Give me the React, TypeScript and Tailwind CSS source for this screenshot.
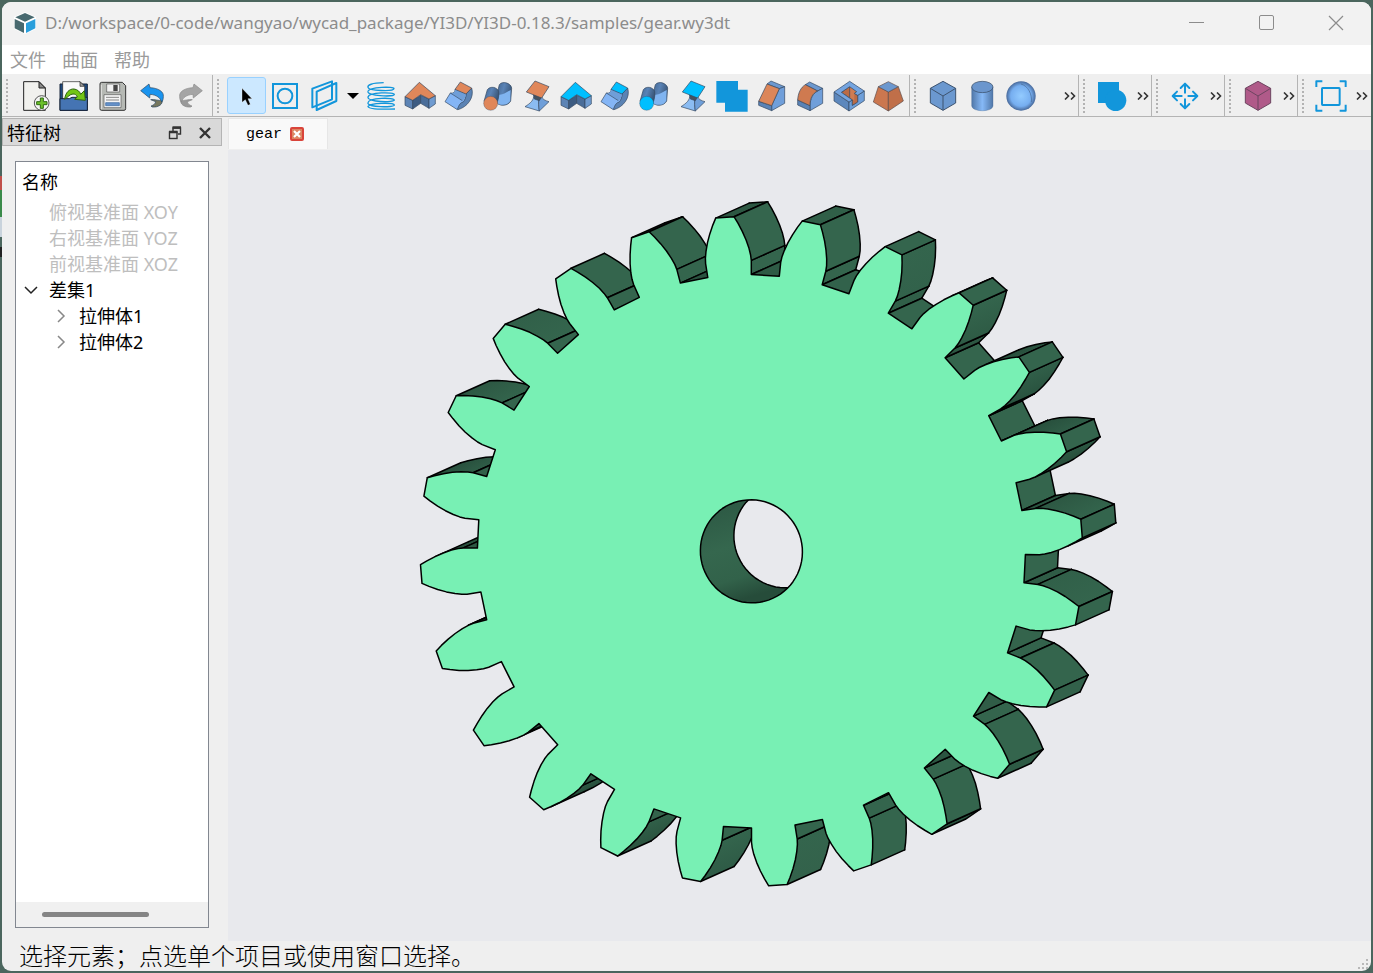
import type { ReactNode } from 'react';
import { useId, useState } from 'react';

const UI_FONT = "font-['Noto_Sans','Noto_Sans_CJK_SC',sans-serif]";

const BLUE = '#1296db';
const EDGE = '#33475f';

/* ---------- toolbar icons, drawn on a 96 x 96 grid ---------- */

function Icon({ children }: { children: ReactNode }) {
  return (
    <svg viewBox="0 0 96 96" className="size-8 shrink-0" fill="none" strokeLinejoin="round" aria-hidden="true">
      {children}
    </svg>
  );
}

function NewIcon() {
  return (
    <Icon>
      <path d="M14 5H60L79 24V91H14Z" fill="#f1f1ee" stroke="#222" strokeWidth="3" />
      <path d="M60 5V24H79Z" fill="#8b8b8b" stroke="#222" strokeWidth="3" />
      <circle cx="68" cy="69" r="22" fill="#f4f4f4" stroke="#555" strokeWidth="3" />
      <path d="M64 54h9v11h11v9H73v11h-9V74H53v-9h11Z" fill="#6cc12a" stroke="#2e6a12" strokeWidth="3" />
    </Icon>
  );
}

function OpenIcon() {
  return (
    <Icon>
      <path d="M6 12H88V91H6Z" fill="#1f4a80" stroke="#16243a" strokeWidth="3" />
      <path d="M14 5H66L80 19V60H14Z" fill="#fafafa" stroke="#222" strokeWidth="2" />
      <path d="M66 5V19H80Z" fill="#999" stroke="#222" strokeWidth="2" />
      <path d="M6 56H34L42 52H88V91H6Z" fill="#4574b3" stroke="#16243a" strokeWidth="3" />
      <path
        d="M20 58C22 38 34 26 48 27C59 28 66 36 68 43L79 32L82 61L50 58L58 51C55 44 51 42 45 42C36 42 30 51 20 58Z"
        fill="#72c516"
        stroke="#2e6410"
        strokeWidth="3"
      />
    </Icon>
  );
}

function SaveIcon() {
  return (
    <Icon>
      <path d="M14 7H76L86 17V86Q86 91 81 91H13Q9 91 9 86V12Q9 7 14 7Z" fill="#b6b9b4" stroke="#333" strokeWidth="3" />
      <path d="M13 14V87" stroke="#e4e4e2" strokeWidth="3" />
      <rect x="29" y="12" width="39" height="24" fill="#f2f2f2" stroke="#555" strokeWidth="2" />
      <rect x="49" y="15" width="13" height="18" fill="#444" />
      <rect x="21" y="44" width="51" height="39" fill="#f5f5f5" stroke="#555" strokeWidth="2" />
      <path d="M27 52H66M27 60H66" stroke="#888" strokeWidth="3" />
      <rect x="26" y="68" width="41" height="9" fill="#6591c9" stroke="#36679f" strokeWidth="2" />
    </Icon>
  );
}

function UndoIcon({ disabled = false }: { disabled?: boolean }) {
  return (
    <Icon>
      <g transform={disabled ? 'matrix(-1 0 0 1 96 0)' : undefined} stroke={disabled ? '#888' : '#27445f'} strokeWidth="2">
        <path d="M78 60C82 72 68 83 48 81L45 78C54 75 58 71 59 65L44 59C56 56 66 64 78 60Z" fill={disabled ? '#999' : '#77785f'} />
        <path d="M14 32L39 12L42 23C68 24 84 36 82 49C82 58 80 63 77 66C74 54 61 44 42 43L41 54Z" fill={disabled ? '#a5a5a5' : '#1a94ef'} />
      </g>
    </Icon>
  );
}

function PointerIcon() {
  return (
    <Icon>
      <path d="M36 25V67L46 59L54 76L61 73L54 56H66Z" fill="#000" stroke="#fff" strokeWidth="1" />
    </Icon>
  );
}

function SketchIcon() {
  return (
    <Icon>
      <rect x="12" y="12" width="72" height="72" stroke={BLUE} strokeWidth="6" strokeLinejoin="miter" />
      <circle cx="48" cy="48" r="22" stroke={BLUE} strokeWidth="6" />
    </Icon>
  );
}

function PlaneIcon() {
  return (
    <Icon>
      <path d="M13 26L72 4V58L13 82Z" stroke={BLUE} strokeWidth="6" />
      <path d="M26 35L85 9V63L26 90Z" stroke={BLUE} strokeWidth="6" />
    </Icon>
  );
}

function CoilIcon() {
  return (
    <Icon>
      <g stroke={BLUE} strokeWidth="4">
        <path d="M56 8C20 8 7 16 9 22C11 33 86 35 87 26C88 19 14 20 9 34" />
        <path d="M9 34C4 48 86 52 88 43C88 36 12 36 9 51C6 67 88 68 88 60C88 52 12 52 9 68C4 83 88 83 88 75C86 67 16 68 9 79C10 89 62 88 90 87" />
      </g>
    </Icon>
  );
}

type TintProps = { top: string };

function ExtrudeIcon({ top }: TintProps) {
  return (
    <Icon>
      <g stroke={EDGE} strokeWidth="2">
        <path d="M3 50L26 61V87L3 76Z" fill="#5d84b5" />
        <path d="M26 61L50 46V70L26 87Z" fill="#3d5c82" />
        <path d="M50 46L75 57V85L50 70Z" fill="#4a6d99" />
        <path d="M75 57L94 47V72L75 85Z" fill="#6f9bd0" />
        <path d="M3 50L46 7L94 47L75 57L50 44L26 61Z" fill={top} />
      </g>
    </Icon>
  );
}

function RevolveIcon({ top }: TintProps) {
  return (
    <Icon>
      <g stroke={EDGE} strokeWidth="2">
        <path d="M86 24C95 53 73 81 45 89L39 84C47 70 67 66 69 42Z" fill="#5b83b4" />
        <path d="M36 28C37 36 32 41 22 39L6 65L43 89C47 75 54 66 60 67C67 59 69 51 69 42Z" fill="#84b5f5" />
        <path d="M36 28C37 36 32 41 25 40L59 62C66 55 69 49 69 42Z" fill="#6f9ed8" stroke="none" />
        <path d="M22 39L58 62" />
        <path d="M52 6L86 24L69 42L36 28Z" fill={top} />
      </g>
    </Icon>
  );
}

function PipeIcon({ top }: TintProps) {
  const id = useId();
  return (
    <Icon>
      <defs>
        <linearGradient id={id} x1="0" y1="0" x2="1" y2="0.4">
          <stop offset="0" stopColor="#42648e" />
          <stop offset="0.5" stopColor="#5a83b6" />
          <stop offset="1" stopColor="#3a5678" />
        </linearGradient>
      </defs>
      <path d="M47 34L52 14C60 2 86 8 89 24L86 63C78 78 56 80 43 68Z" fill={`url(#${id})`} stroke={EDGE} strokeWidth="2" />
      <path d="M50 44C62 46 74 36 86 30L85 62C78 77 56 78 44 68Z" fill="#80b4f0" />
      <path d="M6 64L16 29C25 17 46 21 50 35C52 49 48 61 44 72Z" fill={`url(#${id})`} stroke={EDGE} strokeWidth="2" />
      <circle cx="26" cy="70" r="21" fill={top} stroke={EDGE} strokeWidth="1" />
    </Icon>
  );
}

function LoftIcon({ top }: TintProps) {
  return (
    <Icon>
      <g stroke={EDGE} strokeWidth="2">
        <path d="M38 44C40 60 28 70 12 80L55 93C53 80 52 69 54 50Z" fill="#8bbcf2" />
        <path d="M54 50C52 69 53 80 55 93L84 65C72 62 64 57 62 50Z" fill="#6f9fd9" />
        <path d="M38 42L62 50L55 62L40 57Z" fill="#45525f" />
        <path d="M42 3L84 20L62 54L16 36Z" fill={top} />
      </g>
    </Icon>
  );
}

function UnionIcon() {
  return (
    <Icon>
      <path d="M1 3H66V29H95V95H27V68H1Z" fill={BLUE} />
    </Icon>
  );
}

function ChamferIcon() {
  return (
    <Icon>
      <g stroke={EDGE} strokeWidth="2">
        <path d="M48 3L89 20L73 26L36 12Z" fill="#6c98cf" />
        <path d="M73 26L89 20V70L50 92V77Z" fill="#709fda" />
        <path d="M11 64L50 77V92L11 76Z" fill="#5a83b6" />
        <path d="M36 12L73 26L50 77L11 64Z" fill="#dc8659" />
      </g>
    </Icon>
  );
}

function FilletIcon() {
  return (
    <Icon>
      <g stroke={EDGE} strokeWidth="2">
        <path d="M47 6L86 25L71 33L34 14Z" fill="#6c98cf" />
        <path d="M71 33L86 25V70L48 92V77C49 55 57 40 71 33Z" fill="#709fda" />
        <path d="M11 60L48 77V92L11 75Z" fill="#5a83b6" />
        <path d="M34 14L71 33C55 40 48 55 48 77L11 60C12 40 20 22 34 14Z" fill="#cf7a50" />
      </g>
    </Icon>
  );
}

function ShellIcon() {
  return (
    <Icon>
      <g stroke={EDGE} strokeWidth="2">
        <path d="M3 36L48 66V93L3 63Z" fill="#5d88bd" />
        <path d="M48 66L58 60V76L74 66V46L94 33V62L48 93Z" fill="#6f9fd9" />
        <path d="M25 37L50 20L71 35L64 40L74 46V66L58 76V60Z" fill="#bb6b45" />
        <path d="M50 20L71 35L64 40V62L50 52Z" fill="#cf7c53" stroke="none" />
        <path d="M50 20V53" />
        <path d="M3 36L50 4L94 33L74 46L64 40L71 35L50 20L25 37L58 60L48 66Z" fill="#74a4e0" />
      </g>
    </Icon>
  );
}

function DraftIcon() {
  return (
    <Icon>
      <g stroke="#5a4a48" strokeWidth="2">
        <path d="M19 20L49 36V93L4 66Z" fill="#cb774f" />
        <path d="M79 20L49 36V93L94 63Z" fill="#c06f49" />
        <path d="M49 5L79 20L49 36L19 20Z" fill="#6c98cf" />
      </g>
    </Icon>
  );
}

function CubeIcon({ fill, edge }: { fill: string; edge: string }) {
  return (
    <Icon>
      <path d="M48 4L86 25V69L48 91L10 69V25Z" fill={fill} stroke={edge} strokeWidth="3" />
      <path d="M10 25L48 48L86 25M48 48V91" stroke={edge} strokeWidth="3" />
    </Icon>
  );
}

function CylinderIcon() {
  const id = useId();
  return (
    <Icon>
      <defs>
        <linearGradient id={id}>
          <stop offset="0" stopColor="#5077a8" />
          <stop offset="0.5" stopColor="#86b9f7" />
          <stop offset="1" stopColor="#5077a8" />
        </linearGradient>
      </defs>
      <path d="M17 21V78C19 97 79 97 81 78V21Z" fill={`url(#${id})`} stroke="#4a6a92" strokeWidth="1" />
      <ellipse cx="49" cy="21" rx="32" ry="17" fill="#6b96cd" stroke={EDGE} strokeWidth="2" />
    </Icon>
  );
}

function SphereIcon() {
  const id = useId();
  return (
    <Icon>
      <defs>
        <radialGradient id={id}>
          <stop offset="0" stopColor="#93cbff" />
          <stop offset="0.7" stopColor="#76aef0" />
          <stop offset="1" stopColor="#48699a" />
        </radialGradient>
      </defs>
      <circle cx="48" cy="48" r="44" fill={`url(#${id})`} />
      <path d="M48 12C69 18 82 42 79 66" stroke="#47688f" strokeWidth="2" />
    </Icon>
  );
}

function BooleanIcon() {
  return (
    <Icon>
      <path d="M6 6H69V69H6Z" fill={BLUE} />
      <circle cx="59" cy="61" r="32" fill={BLUE} />
    </Icon>
  );
}

function MoveIcon() {
  return (
    <Icon>
      <g stroke={BLUE} strokeWidth="6" strokeLinecap="round">
        <path d="M48 13V38M48 58V83M13 48H38M58 48H83" />
        <path d="M35 24L48 11L61 24M35 72L48 85L61 72M24 35L11 48L24 61M72 35L85 48L72 61" />
      </g>
    </Icon>
  );
}

function FitIcon() {
  return (
    <Icon>
      <g stroke={BLUE} strokeWidth="6">
        <rect x="21" y="24" width="53" height="51" rx="2" />
        <path d="M4 21V4H22M74 4H92V21M92 74V92H74M22 92H4V74" />
      </g>
    </Icon>
  );
}

/* ---------- toolbars ---------- */

type Tool = { label: string; icon: ReactNode };

const ORANGE = '#e0875a';
const CYAN = '#00bfff';

const fileTools: Tool[] = [
  { label: '新建', icon: <NewIcon /> },
  { label: '打开', icon: <OpenIcon /> },
  { label: '保存', icon: <SaveIcon /> },
  { label: '撤销', icon: <UndoIcon /> },
  { label: '重做', icon: <UndoIcon disabled /> },
];

const pickTools: Tool[] = [
  { label: '选择', icon: <PointerIcon /> },
  { label: '草图', icon: <SketchIcon /> },
  { label: '基准面', icon: <PlaneIcon /> },
];

const featureTools: Tool[] = [
  { label: '螺旋线', icon: <CoilIcon /> },
  { label: '拉伸', icon: <ExtrudeIcon top={ORANGE} /> },
  { label: '旋转', icon: <RevolveIcon top={ORANGE} /> },
  { label: '扫描', icon: <PipeIcon top={ORANGE} /> },
  { label: '放样', icon: <LoftIcon top={ORANGE} /> },
  { label: '拉伸切除', icon: <ExtrudeIcon top={CYAN} /> },
  { label: '旋转切除', icon: <RevolveIcon top={CYAN} /> },
  { label: '扫描切除', icon: <PipeIcon top={CYAN} /> },
  { label: '放样切除', icon: <LoftIcon top={CYAN} /> },
  { label: '合并', icon: <UnionIcon /> },
  { label: '倒角', icon: <ChamferIcon /> },
  { label: '圆角', icon: <FilletIcon /> },
  { label: '抽壳', icon: <ShellIcon /> },
  { label: '拔模', icon: <DraftIcon /> },
];

const solidTools: Tool[] = [
  { label: '长方体', icon: <CubeIcon fill="#6b98cf" edge="#3d536f" /> },
  { label: '圆柱体', icon: <CylinderIcon /> },
  { label: '球体', icon: <SphereIcon /> },
];

function ToolButton({ tool, active = false, onClick }: { tool: Tool; active?: boolean; onClick?: () => void }) {
  return (
    <button
      type="button"
      aria-label={tool.label}
      onClick={onClick}
      className={`flex h-[37px] w-[39px] shrink-0 items-center justify-center rounded-[3px] border pr-px ${
        active ? 'border-[#99d1ff] bg-[#cce8ff]' : 'border-transparent'
      }`}
    >
      {tool.icon}
    </button>
  );
}

function Toolbar({ children, overflow = false, grow = false, last = false }: { children: ReactNode; overflow?: boolean; grow?: boolean; last?: boolean }) {
  return (
    <div
      role="toolbar"
      className={`flex h-[41px] shrink-0 items-center ${grow ? 'grow' : overflow ? 'w-[73px]' : ''} ${
        last ? 'pr-[2px]' : 'border-r border-[#b4b4b4] pr-px'
      }`}
    >
      <span className="flex w-[14px] shrink-0 pl-1">
        <span className="h-[34px] border-l-2 border-dotted border-[#b3b3b3]" />
      </span>
      {children}
      {overflow && (
        <button type="button" aria-label="更多" className="ml-auto flex h-[37px] w-[14px] items-center justify-center">
          <svg viewBox="0 0 12 8" className="h-2 w-3" fill="none" stroke="#333" strokeWidth="1.6" aria-hidden="true">
            <path d="M1 0.5L4.5 4L1 7.5M7 0.5L10.5 4L7 7.5" />
          </svg>
        </button>
      )}
    </div>
  );
}

/* ---------- gear model ---------- */

type Point = [number, number];

const TEETH = 24;
const CENTER: Point = [523.4, 400.8];
// screen images of the model's unit axes and of its thickness
const AXIS_U: Point = [-26.5, -334];
const AXIS_V: Point = [330.3, -22.8];
const DEPTH: Point = [33.5, -15];
const ROOT = 0.827;
const BASE = 0.869;
const BORE = 0.154;
const HALF_TOOTH = (4.57 * Math.PI) / 180;
const FLANK_RADII = [0.869, 0.885, 0.905, 0.93, 0.955, 0.98, 1];

function project(r: number, angle: number): Point {
  const a = r * Math.cos(angle);
  const b = r * Math.sin(angle);
  return [CENTER[0] + a * AXIS_U[0] + b * AXIS_V[0], CENTER[1] + a * AXIS_U[1] + b * AXIS_V[1]];
}

function flankAngle(r: number) {
  const pressure = Math.acos(BASE / r);
  return HALF_TOOTH - (Math.tan(pressure) - pressure);
}

// one polyline per smooth face of the rim, clockwise
function buildFaces() {
  const faces: Point[][] = [];
  for (let i = 0; i < TEETH; i++) {
    const mid = (i * 2 * Math.PI) / TEETH;
    const next = ((i + 1) * 2 * Math.PI) / TEETH;
    const rise = FLANK_RADII.map((r) => project(r, mid - flankAngle(r)));
    const fall = [...FLANK_RADII].reverse().map((r) => project(r, mid + flankAngle(r)));
    const rootStart = project(ROOT, mid - HALF_TOOTH);
    const rootEnd = project(ROOT, mid + HALF_TOOTH);
    faces.push([rootStart, rise[0]]);
    faces.push(rise);
    faces.push([rise[rise.length - 1], fall[0]]);
    faces.push(fall);
    faces.push([fall[fall.length - 1], rootEnd]);
    faces.push([rootEnd, project(ROOT, next - HALF_TOOTH)]);
  }
  return faces;
}

const depthLength = Math.hypot(DEPTH[0], DEPTH[1]);
const shift = ([x, y]: Point): Point => [x + DEPTH[0], y + DEPTH[1]];
const toPath = (points: Point[]) => `M${points.map(([x, y]) => `${x.toFixed(1)} ${y.toFixed(1)}`).join('L')}`;

// above zero when the wall standing on this edge turns to the viewer
function facing(a: Point, b: Point) {
  const dx = b[0] - a[0];
  const dy = b[1] - a[1];
  return (dy * DEPTH[0] - dx * DEPTH[1]) / (Math.hypot(dx, dy) * depthLength);
}

function wallColor(value: number) {
  const t = Math.min(1, Math.max(0, value) * 1.3);
  const mix = (a: number, b: number) => Math.round(a + (b - a) * t);
  return `rgb(${mix(37, 52)}, ${mix(75, 101)}, ${mix(57, 77)})`;
}

function buildWalls(faces: Point[][]) {
  return faces
    .map((face) =>
      face.filter((p, k) => (k > 0 && facing(face[k - 1], p) > 0) || (k < face.length - 1 && facing(p, face[k + 1]) > 0)),
    )
    .filter((visible) => visible.length > 1)
    .map((visible) => {
      const first = visible[0];
      const last = visible[visible.length - 1];
      // shading changes only across the depth direction
      const across = ((last[1] - first[1]) * DEPTH[0] - (last[0] - first[0]) * DEPTH[1]) / depthLength ** 2;
      return {
        visible,
        from: wallColor(facing(first, visible[1])),
        to: wallColor(facing(visible[visible.length - 2], last)),
        gradientEnd: [first[0] - DEPTH[1] * across, first[1] + DEPTH[0] * across] as Point,
        ends: [first, last],
        order: (first[0] + last[0]) * DEPTH[0] + (first[1] + last[1]) * DEPTH[1],
      };
    })
    .sort((a, b) => a.order - b.order);
}

const faces = buildFaces();
const walls = buildWalls(faces);
const outline = `${toPath(faces.flat())}Z`;
const bore = `${toPath(Array.from({ length: 72 }, (_, i) => project(BORE, (i * Math.PI) / 36)))}Z`;

function GearView() {
  return (
    <svg viewBox="0 0 1143 790" className="h-full w-full" fill="none" strokeLinejoin="round" strokeLinecap="round" role="img" aria-label="gear">
      <defs>
        <clipPath id="bore-clip">
          <path d={bore} />
        </clipPath>
        <linearGradient id="bore-wall" x1="0" y1="0" x2="0.3" y2="1">
          <stop offset="0" stopColor="#2b5642" />
          <stop offset="0.5" stopColor="#35674e" />
          <stop offset="0.8" stopColor="#32624a" />
          <stop offset="1" stopColor="#264c3a" />
        </linearGradient>
        {walls.map(({ visible, from, to, gradientEnd }, i) => (
          <linearGradient
            key={i}
            id={`wall-${i}`}
            gradientUnits="userSpaceOnUse"
            x1={visible[0][0]}
            y1={visible[0][1]}
            x2={gradientEnd[0]}
            y2={gradientEnd[1]}
          >
            <stop offset="0" stopColor={from} />
            <stop offset="1" stopColor={to} />
          </linearGradient>
        ))}
      </defs>
      {walls.map(({ visible, ends }, i) => (
        <g key={i} stroke="#000" strokeWidth="1.5">
          <path d={`${toPath([...visible, ...[...visible].reverse().map(shift)])}Z`} fill={`url(#wall-${i})`} stroke="none" />
          <path d={toPath(visible.map(shift))} />
          {ends.map((p, k) => (
            <path key={k} d={toPath([p, shift(p)])} />
          ))}
        </g>
      ))}
      <path d={outline} fill="#78f0b4" stroke="#000" strokeWidth="1.5" />
      <g clipPath="url(#bore-clip)">
        <path d={bore} fill="url(#bore-wall)" />
        <path d={bore} fill="#e8e9ed" stroke="#000" strokeWidth="1.5" transform={`translate(${DEPTH[0]} ${DEPTH[1]})`} />
      </g>
      <path d={bore} stroke="#000" strokeWidth="1.5" />
    </svg>
  );
}

/* ---------- feature tree ---------- */

const planes = ['俯视基准面 XOY', '右视基准面 YOZ', '前视基准面 XOZ'];
const bodies = ['拉伸体1', '拉伸体2'];

function FeatureTree() {
  const [open, setOpen] = useState(true);

  return (
    <div className="mx-[13px] mt-[15px] mb-[13px] flex min-h-0 flex-1 flex-col border border-[#828790] bg-white">
      <div className="flex h-[37px] shrink-0 items-center pt-1 pl-[6px]">名称</div>
      <ul role="tree" className="min-h-0 flex-1 overflow-hidden leading-[26px] whitespace-nowrap">
        {planes.map((name) => (
          <li key={name} role="treeitem" className="h-[26px] pl-[33px] text-[#bebebe]">
            {name}
          </li>
        ))}
        <li role="treeitem" aria-expanded={open}>
          <button type="button" onClick={() => setOpen(!open)} className="flex h-[26px] items-center pl-2">
            <svg viewBox="0 0 14 14" className="mr-[11px] size-[14px]" fill="none" stroke="#222" strokeWidth="1.5" aria-hidden="true">
              <path d="M1 4L7 10L13 4" />
            </svg>
            差集1
          </button>
          {open && (
            <ul role="group">
              {bodies.map((name) => (
                <li key={name} role="treeitem">
                  <button type="button" className="flex h-[26px] items-center pl-[38px]">
                    <svg viewBox="0 0 14 14" className="mr-[11px] size-[14px]" fill="none" stroke="#888" strokeWidth="1.5" aria-hidden="true">
                      <path d="M4 1L10 7L4 13" />
                    </svg>
                    {name}
                  </button>
                </li>
              ))}
            </ul>
          )}
        </li>
      </ul>
      <div className="flex h-[25px] shrink-0 items-center bg-[#f0f0f0] pl-[26px]">
        <div className="h-[5px] w-[107px] rounded-full bg-[#858585]" />
      </div>
    </div>
  );
}

export default function App() {
  const [active, setActive] = useState('选择');

  return (
    <div className={`flex h-screen overflow-hidden bg-[#4b665e] pt-[2px] pr-[2px] pb-[2px] text-[18px] text-black ${UI_FONT}`}>
      <div className="flex w-[2px] shrink-0 flex-col pt-[174px]">
        <div className="h-[14px] bg-[#c0504a]" />
        <div className="h-[27px] bg-[#3a8a4a]" />
        <div className="h-[20px] bg-[#c9d3dc]" />
        <div className="mt-[10px] h-[10px] bg-[#222]" />
      </div>
      <div className="flex min-w-0 flex-1 flex-col overflow-hidden rounded-[9px] bg-[#efefef]">
        <header className="flex h-[43px] shrink-0 items-center bg-[#f2f2f2] pb-[2px] pl-3 text-[#8c8c8c]">
          <svg viewBox="0 0 66 66" className="size-[22px] shrink-0" aria-hidden="true">
            <path d="M33 0L66 15V51L33 66L0 51V15Z" fill="#fff" />
            <path d="M33 3L62 16L33 29L4 16Z" fill="#48696f" />
            <path d="M2 21L30 34V63L2 49Z" fill="#48696f" />
            <path d="M36 34L64 21V49L36 63Z" fill="#2a9fdc" />
          </svg>
          <h1 className="ml-[9px] min-w-0 flex-1 truncate text-[17px]">
            D:/workspace/0-code/wangyao/wycad_package/YI3D/YI3D-0.18.3/samples/gear.wy3dt
          </h1>
          <button type="button" aria-label="最小化" className="flex h-full w-[70px] items-center justify-center">
            <span className="h-px w-[15px] bg-[#8c8c8c]" />
          </button>
          <button type="button" aria-label="最大化" className="flex h-full w-[70px] items-center justify-center">
            <span className="size-[15px] rounded-[2px] border border-[#8c8c8c]" />
          </button>
          <button type="button" aria-label="关闭" className="flex h-full w-[70px] items-center justify-center">
            <svg viewBox="0 0 16 16" className="size-4" stroke="#8c8c8c" strokeWidth="1.2" aria-hidden="true">
              <path d="M1 1L15 15M15 1L1 15" />
            </svg>
          </button>
        </header>

        <nav className="flex h-[30px] shrink-0 items-center gap-4 border-b border-[#efefef] bg-white pt-[2px] pl-2 text-[#9a9a9a]">
          <button type="button">文件</button>
          <button type="button">曲面</button>
          <button type="button">帮助</button>
        </nav>

        <div className="flex h-[42px] shrink-0 border-b border-[#b4b4b4]">
          <Toolbar>
            {fileTools.map((tool) => (
              <ToolButton key={tool.label} tool={tool} />
            ))}
          </Toolbar>
          <Toolbar>
            {pickTools.map((tool) => (
              <ToolButton key={tool.label} tool={tool} active={tool.label === active} onClick={() => setActive(tool.label)} />
            ))}
            <button type="button" aria-label="基准面选项" className="flex h-[37px] w-[18px] items-center justify-center">
              <span className="border-x-[6px] border-t-[6px] border-x-transparent border-t-black" />
            </button>
            {featureTools.map((tool) => (
              <ToolButton key={tool.label} tool={tool} active={tool.label === active} onClick={() => setActive(tool.label)} />
            ))}
          </Toolbar>
          <Toolbar grow overflow>
            {solidTools.map((tool) => (
              <ToolButton key={tool.label} tool={tool} />
            ))}
          </Toolbar>
          <Toolbar overflow>
            <ToolButton tool={{ label: '布尔运算', icon: <BooleanIcon /> }} />
          </Toolbar>
          <Toolbar overflow>
            <ToolButton tool={{ label: '平移', icon: <MoveIcon /> }} />
          </Toolbar>
          <Toolbar overflow>
            <ToolButton tool={{ label: '显示模式', icon: <CubeIcon fill="#b05a89" edge="#6d4560" /> }} />
          </Toolbar>
          <Toolbar overflow last>
            <ToolButton tool={{ label: '适应窗口', icon: <FitIcon /> }} />
          </Toolbar>
        </div>

        <div className="flex min-h-0 flex-1">
          <aside className="mt-px mr-[6px] flex w-[220px] shrink-0 flex-col">
            <div className="flex h-[28px] shrink-0 items-center border border-[#b4b4b4] bg-[#d9d9d9] pt-[2px] pr-px pl-1">
              <h2 className="flex-1">特征树</h2>
              <button type="button" aria-label="浮动" className="flex w-[30px] justify-center">
                <svg viewBox="0 0 14 14" className="size-[14px]" fill="none" stroke="#333" aria-hidden="true">
                  <path d="M5 5V2H12.5V8H10" strokeWidth="1.4" />
                  <path d="M4.5 1.5H13" strokeWidth="2.4" />
                  <rect x="1.5" y="6" width="7.5" height="6.5" strokeWidth="1.4" />
                  <path d="M1 6H9.5" strokeWidth="2.4" />
                </svg>
              </button>
              <button type="button" aria-label="关闭特征树" className="flex w-[30px] justify-center">
                <svg viewBox="0 0 12 12" className="size-3" stroke="#333" strokeWidth="2.4" aria-hidden="true">
                  <path d="M1 1L11 11M11 1L1 11" />
                </svg>
              </button>
            </div>
            <FeatureTree />
          </aside>

          <main className="flex min-w-0 flex-1 flex-col">
            <div role="tablist" className="flex h-[33px] shrink-0 items-start pt-px">
              <div className="flex h-[31px] w-[100px] items-center gap-2 border-x border-t border-[#e6e6e6] bg-[#f9f9f9] pl-[17px]">
                <button type="button" role="tab" aria-selected="true" className="pt-[2px] font-['Liberation_Mono',monospace] text-[15px]">
                  gear
                </button>
                <button type="button" aria-label="关闭 gear" className="flex size-[14px] items-center justify-center rounded-[2px] border-2 border-[#d9443a] bg-[#dc8562]">
                  <svg viewBox="0 0 8 8" className="size-2" stroke="#fff" strokeWidth="2.2" aria-hidden="true">
                    <path d="M1 1L7 7M7 1L1 7" />
                  </svg>
                </button>
              </div>
            </div>
            <div className="min-h-0 flex-1 bg-[#e8e9ed]">
              <GearView />
            </div>
          </main>
        </div>

        <footer className="flex h-[30px] shrink-0 items-center justify-between pl-[17px] font-['Liberation_Sans','Noto_Sans_CJK_SC',sans-serif] text-[24px] font-light">
          <p className="pt-[2px] leading-[28px] whitespace-nowrap">选择元素；点选单个项目或使用窗口选择。</p>
          <svg viewBox="0 0 12 12" className="mr-[2px] size-3 self-end" fill="#b8b8b8" aria-hidden="true">
            <path d="M9 0h2v2H9zM9 4h2v2H9zM9 8h2v2H9zM5 4h2v2H5zM5 8h2v2H5zM1 8h2v2H1z" />
          </svg>
        </footer>
      </div>
    </div>
  );
}
